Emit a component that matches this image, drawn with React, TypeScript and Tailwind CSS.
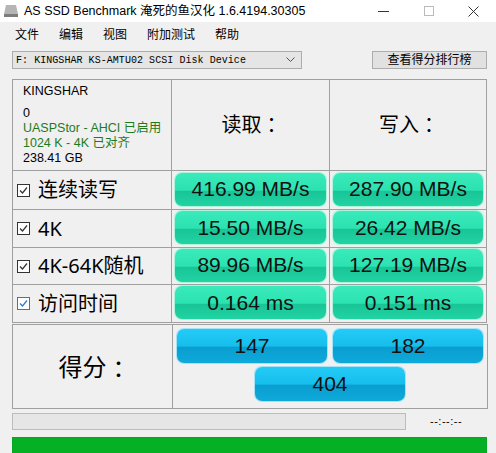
const ui = { fontFamily: '"Noto Sans", "Liberation Sans", "Noto Sans CJK SC", sans-serif' };
const cjk = { fontFamily: '"Liberation Sans", "Noto Sans CJK SC", sans-serif' };
const tc = { fontFamily: '"Noto Sans CJK TC", sans-serif' };
const mono = { fontFamily: '"Liberation Mono", "Noto Sans CJK SC", monospace' };

const rows = [
  { label: "连续读写", read: "416.99 MB/s", write: "287.90 MB/s", blue: false },
  { label: "4K", read: "15.50 MB/s", write: "26.42 MB/s", blue: false },
  { label: "4K-64K随机", read: "89.96 MB/s", write: "127.19 MB/s", blue: false },
  { label: "访问时间", read: "0.164 ms", write: "0.151 ms", blue: true },
];
const heights = ["h-[39px]", "h-[38px]", "h-[37px]", "h-[38px]"];

const Check = ({ blue }: { blue: boolean }) => (
  <svg width="13" height="13" viewBox="0 0 13 13" className="shrink-0">
    <rect x="0.5" y="0.5" width="12" height="12" fill="#fff" stroke={blue ? "#2a7ad2" : "#333"} />
    <path d="M3 6.5 L5.5 9 L10 3.5" fill="none" stroke={blue ? "#2a7ad2" : "#333"} strokeWidth="1.2" />
  </svg>
);

const GreenPill = ({ text }: { text: string }) => (
  <div
    className="h-[33px] w-full rounded-[7px] flex items-center justify-center text-[21px] text-[#111] shadow-[0_0_0_1px_#aef2dc] bg-[linear-gradient(to_bottom,#3aeabb_0%,#2ce2b1_52%,#19c597_56%,#21d3a3_100%)]"
    style={cjk}
  >
    {text}
  </div>
);

const BluePill = ({ text, w }: { text: string; w: string }) => (
  <div
    className={`${w} h-[34px] rounded-[7px] flex items-center justify-center text-[21px] text-[#111] shadow-[0_0_0_1px_#a3e2f7] bg-[linear-gradient(to_bottom,#25cbf7_0%,#15beec_50%,#0a9ed0_54%,#0ea9da_100%)]`}
    style={cjk}
  >
    {text}
  </div>
);

export default function App() {
  return (
    <div className="w-[496px] h-[453px] bg-[#f0f0f0] overflow-hidden relative text-black" style={ui}>
      {/* title bar */}
      <div className="h-[22px] bg-white flex items-center">
        <svg width="16" height="14" viewBox="0 0 16 14" className="ml-[3px] mr-[5px]">
          <path d="M3 1 H13 L15 10 H1 Z" fill="#b5b5b5" />
          <rect x="1" y="10" width="14" height="3" fill="#7d7d7d" />
        </svg>
        <span className="text-[12.5px]" style={cjk}>AS SSD Benchmark 淹死的鱼汉化 1.6.4194.30305</span>
        <div className="ml-auto flex items-center h-full">
          <div className="w-[45px] h-full flex items-center justify-center">
            <div className="w-[11px] h-px bg-[#333]" />
          </div>
          <div className="w-[45px] h-full flex items-center justify-center">
            <div className="w-[10px] h-[10px] border border-[#bbb]" />
          </div>
          <div className="w-[45px] h-full flex items-center justify-center">
            <svg width="11" height="11" viewBox="0 0 11 11">
              <path d="M0.5 0.5 L10.5 10.5 M10.5 0.5 L0.5 10.5" stroke="#333" strokeWidth="1" />
            </svg>
          </div>
        </div>
      </div>

      {/* menu */}
      <div className="h-[26px] flex items-center pl-[5px] text-[12px]" style={cjk}>
        {["文件", "编辑", "视图", "附加测试", "帮助"].map((m) => (
          <span key={m} className="px-[10px]">{m}</span>
        ))}
      </div>

      {/* drive selector */}
      <div className="mt-[3px] flex items-center">
        <div className="ml-3 w-[290px] h-[18px] bg-[#e5e5e5] border border-[#acacac] flex items-center pl-[3px] pr-[6px]">
          <span className="text-[10px] tracking-[0.05px]" style={mono}>F: KINGSHAR KS-AMTU02 SCSI Disk Device</span>
          <svg width="9" height="6" viewBox="0 0 9 6" className="ml-auto">
            <path d="M0.5 0.5 L4.5 4.5 L8.5 0.5" fill="none" stroke="#555" />
          </svg>
        </div>
        <div className="ml-[70px] w-[115px] h-[18px] bg-[#e1e1e1] border border-[#adadad] flex items-center justify-center text-[12px]" style={cjk}>
          查看得分排行榜
        </div>
      </div>

      {/* results table */}
      <div className="ml-3 mt-[10px] w-[475px] border-t border-l border-[#a0a0a0]">
        <div className="flex h-[91px]">
          <div className="w-[159px] border-r border-b border-[#a0a0a0] pl-[10px] pt-[2px] text-[12.5px]" style={cjk}>
            <div className="h-[19px] leading-[19px]">KINGSHAR</div>
            <div className="mt-[5px] h-[15px] leading-[15px]">0</div>
            <div className="h-[15px] leading-[15px] text-[#1f7a1f]">UASPStor - AHCI 已启用</div>
            <div className="h-[15px] leading-[15px] text-[#1f7a1f]">1024 K - 4K 已对齐</div>
            <div className="h-[15px] leading-[15px]">238.41 GB</div>
          </div>
          <div className="w-[158px] border-r border-b border-[#a0a0a0] flex items-center justify-center text-[20px] pl-[2px]" style={cjk}>
            读取<span style={tc}>：</span>
          </div>
          <div className="w-[157px] border-r border-b border-[#a0a0a0] flex items-center justify-center text-[20px] pl-[2px]" style={cjk}>
            写入<span style={tc}>：</span>
          </div>
        </div>
        {rows.map((r, i) => (
          <div key={r.label} className={`flex ${heights[i]}`}>
            <div className="w-[159px] border-r border-b border-[#a0a0a0] flex items-center pl-[4px] gap-[8px]">
              <Check blue={r.blue} />
              <span className="text-[20px] leading-none" style={ui}>{r.label}</span>
            </div>
            <div className="w-[158px] border-r border-b border-[#a0a0a0] flex items-center px-[3px] pb-[2px]">
              <GreenPill text={r.read} />
            </div>
            <div className="w-[157px] border-r border-b border-[#a0a0a0] flex items-center px-[3px] pb-[2px]">
              <GreenPill text={r.write} />
            </div>
          </div>
        ))}
      </div>

      {/* score */}
      <div className="ml-3 mt-[1px] w-[476px] h-[85px] border border-[#a0a0a0] flex">
        <div className="w-[160px] border-r border-[#a0a0a0] flex items-center justify-center text-[24px] pt-[2px] pl-[4px]" style={cjk}>
          得分<span style={tc}>：</span>
        </div>
        <div className="flex-1 flex flex-col items-center pt-[4px] gap-[4px]">
          <div className="flex gap-[6px]">
            <BluePill text="147" w="w-[150px]" />
            <BluePill text="182" w="w-[150px]" />
          </div>
          <BluePill text="404" w="w-[150px]" />
        </div>
      </div>

      {/* progress */}
      <div className="mt-[4px] flex items-center">
        <div className="ml-3 w-[394px] h-[17px] bg-[#e6e6e6] border border-[#bcbcbc]" />
        <span className="ml-[24px] text-[11px] tracking-[0.5px]" style={cjk}>--:--:--</span>
      </div>
      <div className="ml-3 mt-[7px] w-[475px] h-[20px] bg-[#06b025] border border-[#0aa527]" />
    </div>
  );
}
